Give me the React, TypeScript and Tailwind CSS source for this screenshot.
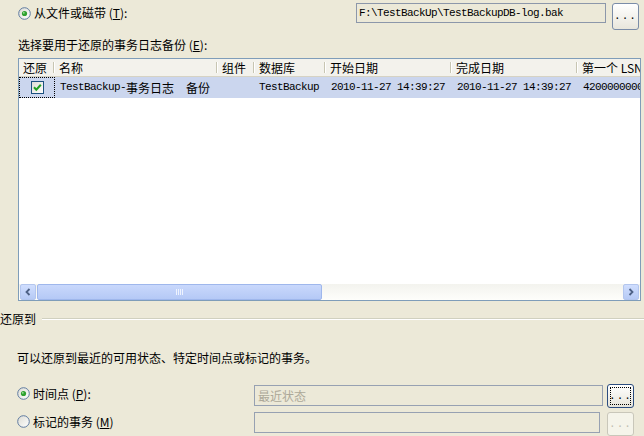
import React from "react";

const CJK = '"Noto Sans CJK SC", "Noto Sans", sans-serif';
const MONO = '"Liberation Mono", "DejaVu Sans Mono", monospace';

function Radio({ checked }: { checked?: boolean }) {
  return (
    <svg width="13" height="13" viewBox="0 0 13 13" className="shrink-0">
      <defs>
        <linearGradient id={checked ? "rg1" : "rg2"} x1="0" y1="0" x2="1" y2="1">
          <stop offset="0" stopColor="#DCDBD3" />
          <stop offset="1" stopColor="#FFFFFF" />
        </linearGradient>
      </defs>
      <circle cx="6.5" cy="6.5" r="5.8" fill={`url(#${checked ? "rg1" : "rg2"})`} stroke="#5F7BA0" strokeWidth="1" />
      {checked && <circle cx="6.5" cy="6.5" r="2.6" fill="#2FA12F" />}
      {checked && <circle cx="5.8" cy="5.8" r="0.9" fill="#9DE39D" />}
    </svg>
  );
}

function Mono({ children }: { children: React.ReactNode }) {
  return (
    <span className="text-[11px] tracking-[-0.6px]" style={{ fontFamily: MONO }}>
      {children}
    </span>
  );
}

function Cjk({ children }: { children: React.ReactNode }) {
  return (
    <span className="text-[12px]" style={{ fontFamily: CJK }}>
      {children}
    </span>
  );
}

function DotsButton({ focused, disabled, h }: { focused?: boolean; disabled?: boolean; h: string }) {
  return (
    <div
      className={`w-[27px] ${h} shrink-0 rounded-[3px] border flex items-center justify-center p-[2px] ${
        disabled
          ? "border-[#C9C7BA] bg-[#F5F4EA] text-[#C0BDB0]"
          : focused
          ? "border-[#2B4C7E] bg-gradient-to-b from-[#FFFFFF] to-[#E6E4DA] text-black"
          : "border-[#7A8CA8] bg-gradient-to-b from-[#FFFFFF] to-[#E8E6DC] text-black"
      }`}
    >
      <div
        className={`w-full h-full flex items-center justify-center ${
          focused ? "border border-dotted border-black" : ""
        }`}
      >
        <span className="text-[11px] leading-none tracking-[1px]" style={{ fontFamily: MONO }}>
          ...
        </span>
      </div>
    </div>
  );
}

function HeaderCell({ w, label, last }: { w: string; label: string; last?: boolean }) {
  return (
    <div className={`${w} shrink-0 h-full flex items-center relative pl-[4px]`}>
      <span className="text-[12px] leading-none whitespace-nowrap text-black" style={{ fontFamily: CJK }}>
        {label}
      </span>
      {!last && (
        <div className="absolute right-0 top-[3px] bottom-[3px] w-[2px] flex">
          <div className="w-px h-full bg-[#C7C5B2]" />
          <div className="w-px h-full bg-white" />
        </div>
      )}
    </div>
  );
}

function Check() {
  return (
    <svg width="13" height="13" viewBox="0 0 13 13">
      <defs>
        <linearGradient id="cbg" x1="0" y1="0" x2="1" y2="1">
          <stop offset="0" stopColor="#DCDBD3" />
          <stop offset="1" stopColor="#FFFFFF" />
        </linearGradient>
      </defs>
      <rect x="0.5" y="0.5" width="12" height="12" fill="url(#cbg)" stroke="#1C5180" />
      <path d="M3 6.3 L5.3 8.7 L9.8 3.8" fill="none" stroke="#21A121" strokeWidth="2" />
    </svg>
  );
}

function ArrowBtn({ dir }: { dir: "l" | "r" }) {
  return (
    <div className="w-[16px] h-full shrink-0 rounded-[2px] bg-gradient-to-b from-[#D0DEFE] to-[#B6CAF5] border border-[#B3C6EE] flex items-center justify-center">
      <svg width="8" height="8" viewBox="0 0 8 8">
        {dir === "l" ? (
          <path d="M5.5 1 L2.5 4 L5.5 7" fill="none" stroke="#4D6185" strokeWidth="1.8" />
        ) : (
          <path d="M2.5 1 L5.5 4 L2.5 7" fill="none" stroke="#4D6185" strokeWidth="1.8" />
        )}
      </svg>
    </div>
  );
}

export default function App() {
  return (
    <div
      className="w-[644px] h-[436px] bg-[#ECE9D8] overflow-hidden text-black text-[12px]"
      style={{ fontFamily: CJK }}
    >
      {/* Row 1 */}
      <div className="flex items-start mt-[3px] h-[27px]">
        <div className="w-[356px] h-[20px] flex items-center pl-[18px] gap-[3px]">
          <Radio checked />
          <span className="leading-none">
            从文件或磁带 (<span className="underline">T</span>):
          </span>
        </div>
        <div className="w-[250px] h-[20px] border border-[#8C97AA] bg-[#ECE9D8] flex items-center pl-[2px] overflow-hidden whitespace-nowrap">
          <Mono>F:\TestBackUp\TestBackupDB-log.bak</Mono>
        </div>
        <div className="ml-[6px]">
          <DotsButton h="h-[27px]" />
        </div>
      </div>

      {/* Label */}
      <div className="mt-[7px] h-[16px] leading-[16px] pl-[18px]">
        选择要用于还原的事务日志备份 (<span className="underline">E</span>):
      </div>

      {/* List box */}
      <div className="mt-[5px] ml-[18px] w-[623px] h-[243px] border border-[#7F9DB9] bg-white flex flex-col overflow-hidden">
        {/* header */}
        <div className="h-[18px] shrink-0 flex bg-[#F3F2EC] border-b border-[#D6D3C4] overflow-hidden">
          <HeaderCell w="w-[36px]" label="还原" />
          <HeaderCell w="w-[163px]" label="名称" />
          <HeaderCell w="w-[37px]" label="组件" />
          <HeaderCell w="w-[71px]" label="数据库" />
          <HeaderCell w="w-[126px]" label="开始日期" />
          <HeaderCell w="w-[126px]" label="完成日期" />
          <HeaderCell w="w-[80px]" label="第一个 LSN" last />
        </div>
        {/* row */}
        <div className="h-[21px] shrink-0 flex bg-[#CBD6EE] overflow-hidden whitespace-nowrap">
          <div className="w-[36px] shrink-0 h-full border border-dotted border-black flex items-center justify-center">
            <Check />
          </div>
          <div className="w-[163px] shrink-0 h-full flex items-center pl-[5px]">
            <Mono>TestBackup-</Mono>
            <Cjk>事务日志</Cjk>
            <Mono>{"\u00a0\u00a0"}</Mono>
            <Cjk>备份</Cjk>
          </div>
          <div className="w-[37px] shrink-0 h-full" />
          <div className="w-[71px] shrink-0 h-full flex items-center pl-[4px]">
            <Mono>TestBackup</Mono>
          </div>
          <div className="w-[126px] shrink-0 h-full flex items-center pl-[5px]">
            <Mono>2010-11-27 14:39:27</Mono>
          </div>
          <div className="w-[126px] shrink-0 h-full flex items-center pl-[5px]">
            <Mono>2010-11-27 14:39:27</Mono>
          </div>
          <div className="w-[80px] shrink-0 h-full flex items-center pl-[5px]">
            <Mono>42000000000000</Mono>
          </div>
        </div>
        <div className="flex-1" />
        {/* scrollbar */}
        <div className="h-[16px] shrink-0 flex bg-gradient-to-b from-[#F3F3EE] to-[#FEFEFB] px-[1px] py-[0px]">
          <ArrowBtn dir="l" />
          <div className="w-[285px] h-full ml-[1px] rounded-[2px] bg-gradient-to-b from-[#C9D8FC] to-[#B5C9F6] border border-[#9FB7EC] flex items-center justify-center gap-[1px]">
            <div className="w-px h-[6px] bg-[#EEF3FE]" />
            <div className="w-px h-[6px] bg-[#EEF3FE]" />
            <div className="w-px h-[6px] bg-[#EEF3FE]" />
            <div className="w-px h-[6px] bg-[#EEF3FE]" />
          </div>
          <div className="flex-1" />
          <ArrowBtn dir="r" />
        </div>
      </div>

      {/* group header */}
      <div className="mt-[10px] h-[16px] flex items-center">
        <span className="leading-[16px]">还原到</span>
        <div className="flex-1 ml-[6px] flex flex-col">
          <div className="h-px bg-[#D0D0BF]" />
          <div className="h-px bg-white" />
        </div>
      </div>

      <div className="mt-[23px] h-[16px] leading-[16px] pl-[17px]">
        可以还原到最近的可用状态、特定时间点或标记的事务。
      </div>

      {/* radio row 1 */}
      <div className="mt-[18px] h-[24px] flex items-start">
        <div className="w-[254px] h-[17px] mt-[1px] flex items-center pl-[17px] gap-[3px]">
          <Radio checked />
          <span className="leading-none">
            时间点 (<span className="underline">P</span>):
          </span>
        </div>
        <div className="mt-[1px] w-[349px] h-[21px] border border-[#97A1B2] bg-[#ECE9D8] flex items-center pl-[3px]">
          <span className="text-[#ACA899] leading-none">最近状态</span>
        </div>
        <div className="ml-[4px]">
          <DotsButton focused h="h-[24px]" />
        </div>
      </div>

      {/* radio row 2 */}
      <div className="mt-[4px] h-[24px] flex items-start">
        <div className="w-[254px] h-[17px] mt-[1px] flex items-center pl-[17px] gap-[3px]">
          <Radio />
          <span className="leading-none">
            标记的事务 (<span className="underline">M</span>)
          </span>
        </div>
        <div className="w-[346px] h-[21px] border border-[#97A1B2] bg-[#ECE9D8]" />
        <div className="ml-[7px]">
          <DotsButton disabled h="h-[24px]" />
        </div>
      </div>
    </div>
  );
}
